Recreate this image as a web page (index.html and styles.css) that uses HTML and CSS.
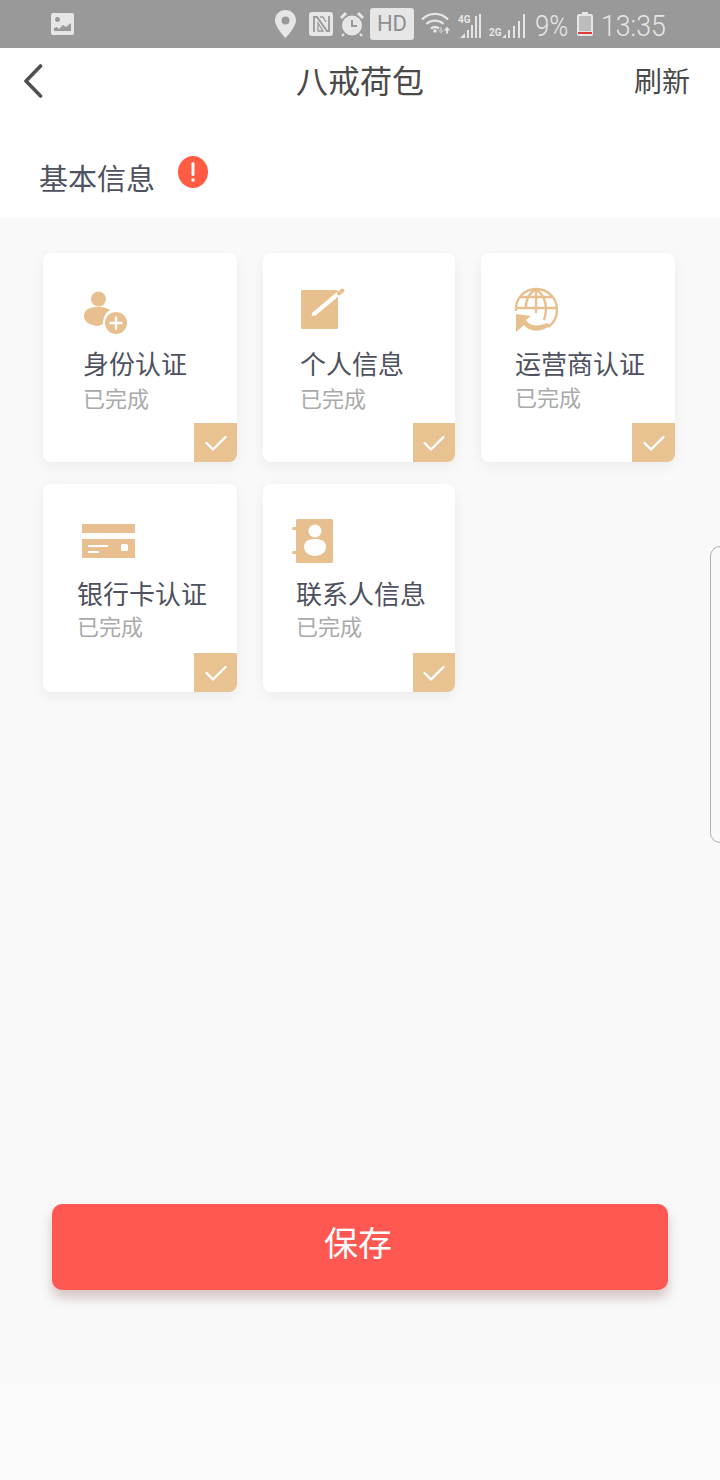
FILE: index.html
```html
<!DOCTYPE html>
<html lang="zh-CN">
<head>
<meta charset="utf-8">
<title>八戒荷包</title>
<link rel="stylesheet" href="styles.css">
</head>
<body>
<div class="status">
  <svg class="st-img" width="23" height="22" viewBox="0 0 23 22"><path fill="#e6e6e6" fill-rule="evenodd" d="M2 0h19a2 2 0 0 1 2 2v18a2 2 0 0 1-2 2H2a2 2 0 0 1-2-2V2a2 2 0 0 1 2-2zM3 15v3h17v-8l-5 4-3-2-4 4-2-2zM6.500 4a2.500 2.500 0 1 0 .01 0z"/></svg>
  <div class="st-right">
    <svg class="st-pin" width="21" height="28" viewBox="0 0 21 28"><path fill="#e6e6e6" fill-rule="evenodd" d="M10.500 0C4.700 0 0 4.600 0 10.400 0 17 10.500 28 10.500 28S21 17 21 10.400C21 4.600 16.300 0 10.500 0zm0 6.500a4 4 0 1 1 0 8 4 4 0 0 1 0-8z"/></svg>
    <svg class="st-nfc" width="24" height="24" viewBox="0 0 24 24"><rect width="24" height="24" rx="3" fill="#e6e6e6"/><path d="M5 20V5h3l10 14h2V4" fill="none" stroke="#999" stroke-width="1.800"/><path d="M9 11l5 8H9zM11 5h3l3 5" fill="none" stroke="#999" stroke-width="1.300"/></svg>
    <svg class="st-alarm" width="24" height="25" viewBox="0 0 24 25"><circle cx="12" cy="13.500" r="10" fill="#e6e6e6"/><path d="M1 6l5-5M23 6l-5-5" stroke="#e6e6e6" stroke-width="3"/><path d="M12 8v6h5" fill="none" stroke="#999" stroke-width="2"/><path d="M4 22l-2 2M20 22l2 2" stroke="#e6e6e6" stroke-width="2"/></svg>
    <span class="st-hd">HD</span>
    <svg class="st-wifi" width="30" height="28" viewBox="0 0 30 28"><g fill="none" stroke="#e6e6e6" stroke-width="2.400"><path d="M1 7.500c7-7.500 19-7.500 26 0"/><path d="M5.500 12c4.500-4.500 12.500-4.500 17 0"/><path d="M10 16.500c2.500-2 5.500-2 8 0"/></g><circle cx="14" cy="19" r="1.800" fill="#e6e6e6"/><path d="M26 14.500l3 4h-2v3h-2v-3h-2z" fill="#e6e6e6"/><path d="M20 22l-3-4h2v-3h2v3h2z" fill="#bdbdbd"/></svg>
    <span class="st-sig st-sig4">
      <span class="st-net">4G</span>
      <svg width="24" height="24" viewBox="0 0 24 24"><g fill="#e6e6e6"><path d="M2 24l5-5v5zM9 24v-8h2v8zM13 24V11h2v13zM17 24V2h2v22zM21 24V0h2v24z"/></g></svg>
    </span>
    <span class="st-sig st-sig2">
      <span class="st-net">2G</span>
      <svg width="24" height="24" viewBox="0 0 24 24"><g fill="#e6e6e6"><path d="M0 24l4-4v4zM6 24v-8h2v8zM11 24v-12h2v12zM16 24V7h2v17zM21 24V0h2v24z"/></g></svg>
    </span>
    <span class="st-pct">9%</span>
    <svg class="st-bat" width="16" height="24" viewBox="0 0 16 24"><path fill="#e6e6e6" d="M5 0h6v2h3a2 2 0 0 1 2 2v18a2 2 0 0 1-2 2H2a2 2 0 0 1-2-2V4a2 2 0 0 1 2-2h3z"/><rect x="2" y="4" width="12" height="15" fill="#bcbcbc"/><rect x="1" y="20" width="14" height="2" fill="#e23b3b"/></svg>
    <span class="st-time">13:35</span>
  </div>
</div>

<header class="head">
  <div class="nav">
    <svg class="back" width="20" height="34" viewBox="0 0 20 34"><path d="M17.500 2L3 17l14.500 15" fill="none" stroke="#4d5153" stroke-width="3.600" stroke-linecap="round" stroke-linejoin="round"/></svg>
    <h1 class="title">八戒荷包</h1>
    <span class="refresh">刷新</span>
  </div>
  <div class="section">
    <span class="section-text">基本信息</span>
    <svg class="warn" width="30" height="32" viewBox="0 0 30 32"><ellipse cx="15" cy="16" rx="15" ry="16" fill="#ff5c43"/><rect x="13.500" y="6" width="3" height="14" rx="1.500" fill="#fff"/><circle cx="15" cy="24" r="1.800" fill="#fff"/></svg>
  </div>
</header>

<main class="main">
  <div class="grid">
    <div class="card c1">
      <div class="icon">
        <svg width="44" height="44" viewBox="0 0 44 44"><g fill="#e8c090"><circle cx="14.500" cy="8" r="7.500"/><path d="M0 25c0-7 6-9 14-9 6 0 9 1 12 3-4 2-7 7-7 14-2 1-4 2-6 2-7-1-13-4-13-10z"/><circle cx="32" cy="32" r="11"/></g><path d="M32 26.500v11M26.500 32h11" stroke="#fff" stroke-width="2.400" stroke-linecap="round"/></svg>
      </div>
      <div class="name">身份认证</div>
      <div class="done">已完成</div>
      <span class="tick"><svg width="24" height="18" viewBox="0 0 24 18"><path d="M2.500 9l6.500 6.500L21.500 3" fill="none" stroke="#fff" stroke-width="2.400" stroke-linecap="round" stroke-linejoin="round"/></svg></span>
    </div>
    <div class="card c2">
      <div class="icon">
        <svg width="44" height="44" viewBox="0 0 44 44"><rect x="0" y="3" width="37" height="39" rx="1.500" fill="#e8c090"/><path d="M10.500 29l1-3.500L36 5l3 3-24.500 20.500z" fill="#fff"/><path d="M38 6.500L41.500 3.500" stroke="#e8c090" stroke-width="4" stroke-linecap="round"/></svg>
      </div>
      <div class="name">个人信息</div>
      <div class="done">已完成</div>
      <span class="tick"><svg width="24" height="18" viewBox="0 0 24 18"><path d="M2.500 9l6.500 6.500L21.500 3" fill="none" stroke="#fff" stroke-width="2.400" stroke-linecap="round" stroke-linejoin="round"/></svg></span>
    </div>
    <div class="card c3">
      <div class="icon">
        <svg width="44" height="46" viewBox="0 0 44 46"><g fill="none" stroke="#e8c090" stroke-width="2.400"><path d="M2 24C1 12 10 2 22 2s21 9 21 21c0 7-3 13-9 17"/><path d="M12 22c-1-8 3-16 10-20 7 5 10 12 10 20 0 4-1 8-2 11"/><path d="M22 2v24M6 10h32M1 21h42"/></g><path d="M2 45V27l15 2-5 4c3 6 12 7 21 3l3 2c-6 7-20 8-26 0z" fill="#e8c090"/></svg>
      </div>
      <div class="name">运营商认证</div>
      <div class="done">已完成</div>
      <span class="tick"><svg width="24" height="18" viewBox="0 0 24 18"><path d="M2.500 9l6.500 6.500L21.500 3" fill="none" stroke="#fff" stroke-width="2.400" stroke-linecap="round" stroke-linejoin="round"/></svg></span>
    </div>
    <div class="card c4">
      <div class="icon">
        <svg width="54" height="44" viewBox="0 0 54 44"><g fill="#e8c090"><rect x="0" y="7" width="53" height="9"/><rect x="0" y="22" width="53" height="19"/></g><g fill="#fff"><rect x="6" y="28" width="20" height="2"/><rect x="6" y="34" width="11" height="2"/><rect x="39" y="27" width="7" height="7" rx="1.500"/></g></svg>
      </div>
      <div class="name">银行卡认证</div>
      <div class="done">已完成</div>
      <span class="tick"><svg width="24" height="18" viewBox="0 0 24 18"><path d="M2.500 9l6.500 6.500L21.500 3" fill="none" stroke="#fff" stroke-width="2.400" stroke-linecap="round" stroke-linejoin="round"/></svg></span>
    </div>
    <div class="card c5">
      <div class="icon">
        <svg width="42" height="46" viewBox="0 0 42 46"><g fill="#e8c090"><rect x="4" y="1" width="37" height="44" rx="1.500"/><rect x="0" y="9" width="6" height="3" rx="1.500"/><rect x="0" y="33" width="6" height="3" rx="1.500"/></g><g fill="#fff"><circle cx="23" cy="13" r="6.500"/><path d="M12 29c0-6 5-8 11-8s11 2 11 8c0 5-5 9-11 9s-11-4-11-9z"/></g></svg>
      </div>
      <div class="name">联系人信息</div>
      <div class="done">已完成</div>
      <span class="tick"><svg width="24" height="18" viewBox="0 0 24 18"><path d="M2.500 9l6.500 6.500L21.500 3" fill="none" stroke="#fff" stroke-width="2.400" stroke-linecap="round" stroke-linejoin="round"/></svg></span>
    </div>
  </div>
  <button class="save" type="button">保存</button>
</main>
<div class="tail"></div>
<div class="side"></div>
</body>
</html>
```
FILE: styles.css
```css
* { box-sizing: border-box; }
html, body { margin: 0; padding: 0; }
body {
  width: 720px;
  height: 1480px;
  overflow: hidden;
  position: relative;
  background: #fbfbfb;
  font-family: "Noto Sans CJK SC", "Noto Sans", sans-serif;
}
.status {
  height: 48px;
  background: #999;
  display: flex;
  align-items: center;
  padding-left: 51px;
  color: #e6e6e6;
}
.st-right {
  margin-left: auto;
  display: flex;
  align-items: center;
  height: 48px;
  padding-right: 53px;
}
.st-nfc { margin-left: 13px; }
.st-alarm { margin-left: 7px; }
.st-hd {
  margin-left: 6px;
  width: 44px;
  height: 32px;
  background: #e6e6e6;
  border-radius: 3px;
  color: #8f8f8f;
  font: 22px/32px Roboto, sans-serif;
  text-align: center;
}
.st-wifi { margin-left: 7px; margin-top: 4px; }
.st-sig { position: relative; display: block; width: 24px; height: 24px; }
.st-sig4 { margin-left: 7px; margin-top: 4px; }
.st-sig2 { margin-left: 7px; margin-top: 4px; width: 37px; padding-left: 13px; }
.st-net {
  position: absolute;
  left: 0;
  top: 0;
  font: 700 10px/12px Roboto, sans-serif;
  color: #e6e6e6;
}
.st-sig2 .st-net { top: 13px; }
.st-pct {
  margin-left: 9px;
  width: 33px;
  font: 300 30px/48px Roboto, sans-serif;
  white-space: nowrap;
  padding-top: 3px;
  transform: scaleX(0.86);
  transform-origin: left;
}
.st-bat { margin-left: 9px; }
.st-time {
  margin-left: 8px;
  width: 66px;
  font: 300 30px/48px Roboto, sans-serif;
  white-space: nowrap;
  padding-top: 3px;
  transform: scaleX(0.89);
  transform-origin: left;
}
.head { height: 170px; background: #fff; }
.nav {
  height: 66px;
  display: flex;
  align-items: center;
  justify-content: space-between;
  position: relative;
  padding: 0 30px 0 23px;
}
.title {
  margin: 0;
  position: absolute;
  left: 0;
  right: 0;
  top: 9px;
  text-align: center;
  font-size: 32px;
  font-weight: 400;
  line-height: 44px;
  color: #4a4a4a;
}
.refresh { font-size: 28px; line-height: 40px; color: #4a4a4a; margin-top: -2px; }
.back { display: block; }
.section {
  display: flex;
  align-items: flex-start;
  padding: 42px 0 0 39px;
}
.section-text { font-size: 29px; line-height: 42px; color: #4e5160; }
.warn { margin-left: 23px; }
.main {
  height: 1167px;
  background: #f9f9f9;
  padding-top: 35px;
}
.grid {
  display: grid;
  grid-template-columns: 194px 192px 194px;
  grid-template-rows: 209px 208px;
  column-gap: 26px;
  row-gap: 22px;
  padding-left: 43px;
}
.card {
  position: relative;
  background: #fff;
  border-radius: 8px;
  box-shadow: 0 4px 14px rgba(0, 0, 0, 0.06);
  padding-top: 34px;
  overflow: hidden;
}
.icon { height: 48px; }
.icon svg { display: block; }
.name {
  margin-top: 10px;
  font-size: 26px;
  line-height: 36px;
  color: #4e5160;
  white-space: nowrap;
  margin-left: -1px;
}
.done {
  margin-top: 1px;
  font-size: 22px;
  line-height: 30px;
  color: #aaa;
  margin-left: -1px;
}
.c1 { padding-left: 41px; }
.c1 .icon { padding-top: 4px; }
.c2 { padding-left: 38px; }
.c3 { padding-left: 35px; }
.c3 .icon { margin-left: -2px; }
.c3 .done { margin-top: 0; }
.c4 { padding-left: 35px; padding-top: 33px; }
.c4 .icon { padding-left: 4px; }
.c4 .done { margin-top: -1px; }
.c5 { padding-left: 29px; padding-top: 34px; }
.c5 .name { margin-top: 9px; }
.c5 .done { margin-top: -1px; }
.c5 .name, .c5 .done { margin-left: 4px; }
.tick {
  position: absolute;
  right: 0;
  bottom: 0;
  width: 43px;
  height: 39px;
  background: #e8c291;
  display: flex;
  align-items: center;
  justify-content: center;
}
.c2 .tick, .c5 .tick { width: 42px; }
.save {
  display: block;
  margin: 512px 0 0 52px;
  width: 616px;
  height: 86px;
  border: 0;
  border-radius: 10px;
  background: #ff5752;
  color: #fff;
  font-family: inherit;
  font-size: 34px;
  padding: 0 4px 12px 0;
  box-shadow: 0 8px 12px rgba(120, 60, 60, 0.28);
}
.tail { height: 95px; }
.side {
  position: absolute;
  top: 546px;
  left: 710px;
  width: 20px;
  height: 297px;
  border: 1px solid #b0b0b0;
  border-radius: 10px;
}
```
